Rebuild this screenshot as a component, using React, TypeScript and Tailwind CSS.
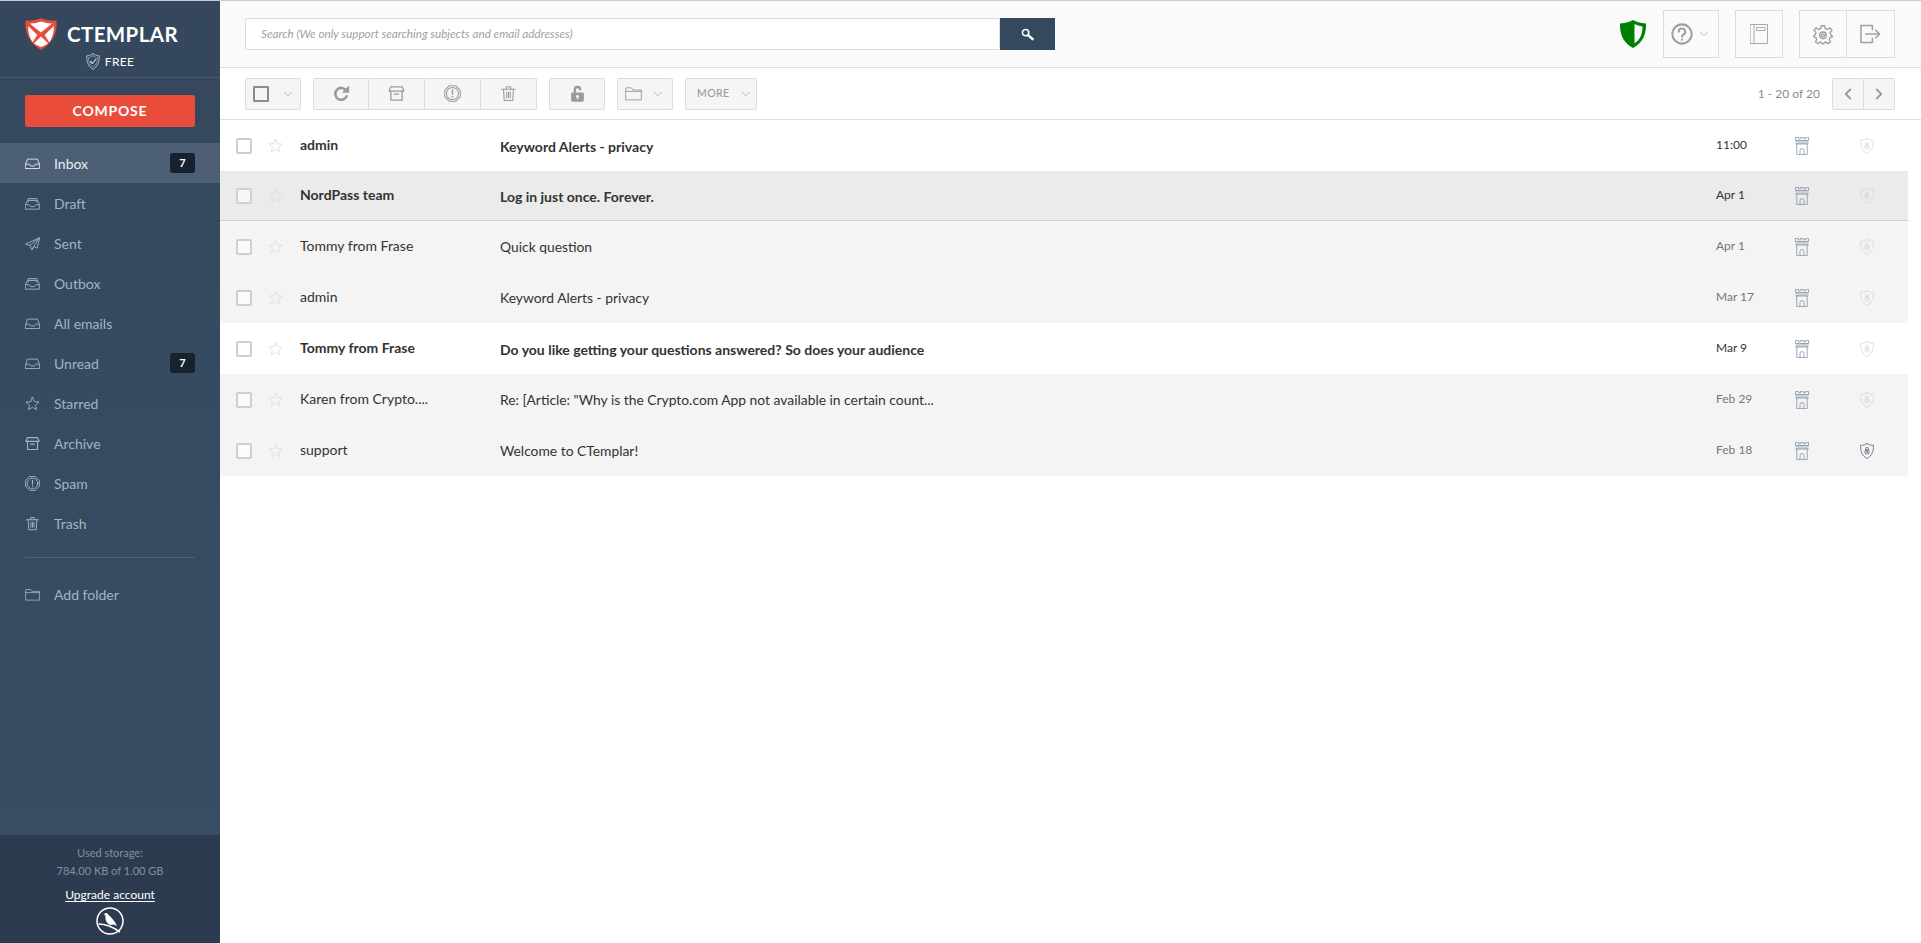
import React from "react";
import { ChevronDown, ChevronLeft, ChevronRight } from "lucide-react";

type P = { className?: string };
const S = ({ className, children, vb = "0 0 24 24", sw = 1.4 }: P & { children: React.ReactNode; vb?: string; sw?: number }) => (
  <svg viewBox={vb} className={className} fill="none" stroke="currentColor" strokeWidth={sw} strokeLinejoin="round" strokeLinecap="round">{children}</svg>
);

const InboxIcon = ({ className }: P) => (
  <S className={className}><path d="M1 13 L4 5 H20 L23 13 V20 H1 Z" /><path d="M1 13 H7 L9 16 H15 L17 13 H23" /></S>
);
const DraftIcon = ({ className }: P) => (
  <S className={className}><path d="M1 13 L4 7 H20 L23 13 V21 H1 Z" /><path d="M1 14 H7 L9 17 H15 L17 14 H23" /><path d="M5 10 V4 H19 V10" /><path d="M8 7 H16" /></S>
);
const SentIcon = ({ className }: P) => (
  <S className={className}><path d="M23 3 L1 13 L8 15 L11 22 L14 17 L19 19 Z" /><path d="M23 3 L8 15" /><path d="M23 3 L11 22" /></S>
);
const StarIcon = ({ className }: P) => (
  <S className={className}><path d="M12 2 L15 9 L22.5 9.7 L16.8 14.6 L18.6 22 L12 18 L5.4 22 L7.2 14.6 L1.5 9.7 L9 9 Z" /></S>
);
const ArchiveIcon = ({ className }: P) => (
  <S className={className} sw={1.8}><path d="M4 2.5 H20 L22.5 8.5 H1.5 Z" /><path d="M4 8.5 V21.5 H20 V8.5" /><path d="M9 13 H15" /></S>
);
const SpamIcon = ({ className }: P) => (
  <S className={className} sw={1.5}><path d="M7.5 1 H16.5 L23 7.5 V16.5 L16.5 23 H7.5 L1 16.5 V7.5 Z" /><circle cx="12" cy="12" r="8.5" /><path d="M12 7 V13" strokeWidth="2" /><path d="M12 16 V17" strokeWidth="2" /></S>
);
const TrashIcon = ({ className }: P) => (
  <S className={className} sw={1.5}><path d="M2.5 6 H21.5" /><path d="M9 6 V2.5 H15 V6" /><path d="M5 6 L6 22 H18 L19 6" /><path d="M9.5 10 V18 M12 10 V18 M14.5 10 V18" /></S>
);
const FolderIcon = ({ className }: P) => (
  <S className={className} sw={1.3}><path d="M1 6 V21 H23 V7 H11 L9 4 H2 Z" /><path d="M1 9 H23" /></S>
);
const LockIcon = ({ className }: P) => (
  <svg viewBox="0 0 24 24" className={className} fill="currentColor"><path d="M5 10.5 H19 A2 2 0 0 1 21 12.5 V21.5 A2 2 0 0 1 19 23.5 H5 A2 2 0 0 1 3 21.5 V12.5 A2 2 0 0 1 5 10.5 Z" /><path d="M6.5 11 V6.5 A5.5 5.5 0 0 1 17.5 6.5 V7.5 H14 V6.5 A2 2 0 0 0 10 6.5 V11 Z" /><circle cx="12" cy="16" r="2" fill="#f5f5f5" /><rect x="11" y="16" width="2" height="4" fill="#f5f5f5" /></svg>
);
const TowerIcon = ({ className }: P) => (
  <svg viewBox="0 0 14 18" className={className} fill="none" stroke="#74859a" strokeWidth="0.7">
    <path d="M.5 3.5 V.4 H3.5 V1.8 H5.5 V.4 H8.5 V1.8 H10.5 V.4 H13.5 V3.5" />
    <rect x=".5" y="3.5" width="13" height="3.5" fill="#ccd1d8" stroke="none" />
    <path d="M.5 3.5 H13.5 M.5 7 H13.5" />
    <path d="M1.8 7 V17.6 H12.2 V7" />
    <path d="M5 17.6 V13.5 A2 2 0 0 1 9 13.5 V17.6" />
  </svg>
);
const ShieldLock = ({ className }: P) => (
  <S className={className} vb="0 0 26 30" sw={1.3}>
    <path d="M13 1 C16 3 20 4.5 25 4.5 C25.5 16 22 24 13 29 C4 24 .5 16 1 4.5 C6 4.5 10 3 13 1 Z" />
    <rect x="8.8" y="13" width="8.4" height="7.5" rx="3.6" />
    <path d="M10.3 13.5 V11 A2.7 2.7 0 0 1 15.7 11 V13.5" />
    <circle cx="13" cy="16.7" r="0.8" />
  </S>
);
const CheckShield = ({ className }: P) => (
  <S className={className} vb="0 0 24 30" sw={1.4}>
    <path d="M12 1 C15 3.5 18 4.5 23 5 C23.5 16 20 24 12 29 C4 24 .5 16 1 5 C6 4.5 9 3.5 12 1 Z" />
    <path d="M12 5 C14.5 7 17 8 20 8 C20 16 18 21 12 25 C6 21 4 16 4 8 C7 8 9.5 7 12 5 Z" opacity=".6" />
    <path d="M7.5 15 L11 18.5 L17 11" strokeWidth="2" />
  </S>
);
const Logo = ({ className }: P) => (
  <svg viewBox="0 0 32 32" className={className}>
    <path d="M16 0.3 C21 2.3 26 3 31.5 2.6 C32.5 14 28 25 16 32 C4 25 -.5 14 .5 2.6 C6 3 11 2.3 16 .3 Z" fill="#e74c3c" />
    <path d="M4.8 5.4 C8 5.6 12 5 16 3.6 C20 5 24 5.6 27.2 5.4 L15.9 14.6 Z" fill="#fff" />
    <path d="M3.2 8 L12.3 17 L7.7 24.2 C4.3 19.6 3 14 3.2 8 Z" fill="#fff" />
    <path d="M28.8 8 L19.7 17 L24.3 24.2 C27.7 19.6 29 14 28.8 8 Z" fill="#fff" />
    <path d="M16 18.6 L23 25.2 C21 26.8 18.5 28 16 29 C13.5 28 11 26.8 9 25.2 Z" fill="#fff" />
  </svg>
);
const Bird = ({ className }: P) => (
  <svg viewBox="0 0 28 28" className={className}>
    <circle cx="14" cy="14" r="13" fill="none" stroke="#fff" strokeWidth="1.5" />
    <path d="M8 7 C10 5 12 6 12.5 8 C15 10 19 14 21 19 L17.5 17.5 L14.5 18 C11 17 9 13 9.5 9 Z" fill="#fff" />
    <path d="M2.5 17 C9 17 17 20 24 25" fill="none" stroke="#fff" strokeWidth="1.6" />
  </svg>
);
const QuestionIcon = ({ className }: P) => (
  <S className={className} sw={2.2}><circle cx="12" cy="12" r="10.5" /><path d="M8.5 9.5 A3.5 3.5 0 1 1 13.5 12.6 C12.5 13.2 12 13.8 12 15" /><path d="M12 18 V18.2" /></S>
);
const BookIcon = ({ className }: P) => (
  <S className={className} vb="0 0 18 20" sw={0.9}><rect x="0.5" y="0.5" width="17" height="19" /><path d="M4 .5 V19.5" /><rect x="7" y="3.5" width="8" height="3" /></S>
);
const GearIcon = ({ className }: P) => (
  <S className={className} sw={1.7}>
    <path d="M10 1.5 H14 L14.7 5 L17 6 L20 4 L22.8 7 L20.5 9.8 L21.3 12 L23 13.7 V15 L20.5 15.5 L19.5 18 L21 21 L18 23 L15.5 21 L13.5 22 L13 23 H11 L10.5 22 L8.5 21 L6 23 L3 21 L4.5 18 L3.5 15.5 L1 15 V13.7 L2.7 12 L3.5 9.8 L1.2 7 L4 4 L7 6 L9.3 5 Z" />
    <circle cx="12" cy="13" r="4" /><circle cx="12" cy="13" r="1.8" />
  </S>
);
const LogoutIcon = ({ className }: P) => (
  <S className={className} vb="0 0 22 20" sw={1.6}><path d="M13 6 V1 H1 V19 H13 V14" strokeLinecap="butt" /><path d="M6 10 H20" /><path d="M16.5 6 L20.5 10 L16.5 14" /></S>
);
const SearchIcon = ({ className }: P) => (
  <svg viewBox="0 0 16 16" className={className} fill="none" stroke="currentColor"><circle cx="6" cy="6" r="3.4" strokeWidth="1.6" /><path d="M8.6 8.6 L13.5 13" strokeWidth="2.6" strokeLinecap="round" /></svg>
);
const GreenShield = ({ className }: P) => (
  <svg viewBox="0 0 26 28" className={className}>
    <path fillRule="evenodd" d="M13 0 C16 2 20 3 26 3.5 C26.5 15 22 23.5 13 28 C4 23.5 -.5 15 0 3.5 C6 3 10 2 13 0 Z M14.5 4 V23.5 C20 20 22.5 14 22.5 6.5 C19.5 6 17 5.2 14.5 4 Z" fill="#008000" />
  </svg>
);

const nav: [string, (p: P) => React.ReactElement, number?][] = [
  ["Inbox", InboxIcon, 7],
  ["Draft", DraftIcon],
  ["Sent", SentIcon],
  ["Outbox", DraftIcon],
  ["All emails", InboxIcon],
  ["Unread", InboxIcon, 7],
  ["Starred", StarIcon],
  ["Archive", ArchiveIcon],
  ["Spam", SpamIcon],
  ["Trash", TrashIcon],
];

const rows = [
  { from: "admin", subject: "Keyword Alerts - privacy", date: "11:00", unread: true, bg: "bg-white h-[51px]" },
  { from: "NordPass team", subject: "Log in just once. Forever.", date: "Apr 1", unread: true, bg: "bg-[#ebebeb] h-[50px] border-b border-[#cfcfcf]", hover: true },
  { from: "Tommy from Frase", subject: "Quick question", date: "Apr 1", bg: "bg-[#f4f4f4] h-[51px]" },
  { from: "admin", subject: "Keyword Alerts - privacy", date: "Mar 17", bg: "bg-[#f4f4f4] h-[51px]" },
  { from: "Tommy from Frase", subject: "Do you like getting your questions answered? So does your audience", date: "Mar 9", unread: true, bg: "bg-white h-[51px]" },
  { from: "Karen from Crypto....", subject: 'Re: [Article: "Why is the Crypto.com App not available in certain count...', date: "Feb 29", bg: "bg-[#f4f4f4] h-[51px]" },
  { from: "support", subject: "Welcome to CTemplar!", date: "Feb 18", bg: "bg-[#f4f4f4] h-[51px]", secure: true },
];

const tbtn = "h-[32px] flex items-center justify-center bg-[#f5f5f5] border border-[#dcdcdc] text-[#9a9a9a]";

export default function App() {
  return (
    <div className="w-[1921px] h-[943px] overflow-hidden flex flex-col bg-white [font-family:Lato,sans-serif] text-[#333]">
      <div className="h-px bg-[#c5ccd4] shrink-0" />
      <div className="flex flex-1 min-h-0">
        <aside className="w-[220px] shrink-0 flex flex-col bg-gradient-to-b from-[#34475d] to-[#384e65]">
          <div className="h-[77px] shrink-0 border-b border-[#46596e] flex flex-col pt-[17px]">
            <div className="flex items-center gap-[10px] h-[32px] pl-[25px]">
              <Logo className="w-[32px] h-[32px]" />
              <span className="text-[20.5px] font-bold tracking-[0.4px] text-white leading-none">CTEMPLAR</span>
            </div>
            <div className="flex items-center justify-center gap-[5px] mt-[3px] h-[17px]">
              <CheckShield className="w-[14px] h-[17px] text-[#c8d6e5]" />
              <span className="text-[12px] text-white tracking-[0.3px]">FREE</span>
            </div>
          </div>
          <div className="px-[25px] pt-[17px] pb-[16px]">
            <button className="w-[170px] h-[32px] pb-[2px] bg-[#ea4c3c] rounded-[2px] text-white text-[14px] font-bold tracking-[0.8px]">COMPOSE</button>
          </div>
          <nav className="flex flex-col">
            {nav.map(([label, Icon, badge], i) => (
              <div key={label} className={`h-[40px] flex items-center pl-[25px] pr-[25px] ${i === 0 ? "bg-[#4d5f74] text-[#e8edf2]" : "text-[#a4b3c3]"}`}>
                <Icon className="w-[15px] h-[15px] shrink-0" />
                <span className="ml-[14px] text-[14px]">{label}</span>
                {badge ? (
                  <span className="ml-auto w-[25px] h-[20px] rounded-[3px] bg-[#18222f] text-white text-[11px] font-bold flex items-center justify-center">{badge}</span>
                ) : null}
              </div>
            ))}
          </nav>
          <div className="mx-[25px] mt-[14px] border-t border-[#4f6176]" />
          <div className="h-[40px] mt-[16px] flex items-center pl-[25px] text-[#a4b3c3]">
            <FolderIcon className="w-[15px] h-[15px]" />
            <span className="ml-[14px] text-[14px]">Add folder</span>
          </div>
          <div className="mt-auto h-[108px] bg-[#2c3b50] flex flex-col items-center pt-[9px] text-[12px]">
            <span className="leading-[18px] text-[11px] text-[#84909f]">Used storage:</span>
            <span className="leading-[18px] text-[11px] text-[#84909f]">784.00 KB of 1.00 GB</span>
            <span className="mt-[6px] leading-[17px] text-white underline underline-offset-2">Upgrade account</span>
            <Bird className="w-[28px] h-[28px] mt-[4px]" />
          </div>
        </aside>
        <main className="flex-1 min-w-0 flex flex-col">
          <header className="h-[67px] shrink-0 bg-[#fafafa] border-b border-[#dedede] flex items-center pl-[25px] pr-[26px]">
            <div className="flex w-[810px] h-[32px]">
              <div className="flex-1 bg-white border border-[#dcdcdc] rounded-l-[2px] flex items-center pl-[15px] text-[11.7px] italic text-[#a0a0a0]">
                Search (We only support searching subjects and email addresses)
              </div>
              <button className="w-[55px] bg-[#34495e] flex items-center justify-center text-white">
                <SearchIcon className="w-[15px] h-[15px]" />
              </button>
            </div>
            <GreenShield className="ml-auto w-[26px] h-[28px]" />
            <button className="ml-[17px] w-[56px] h-[48px] border border-[#dcdcdc] flex items-center justify-center gap-[4px] text-[#a0a0a0]">
              <QuestionIcon className="w-[22px] h-[22px]" />
              <ChevronDown className="w-[14px] h-[14px]" strokeWidth={1.2} />
            </button>
            <button className="ml-[16px] w-[48px] h-[48px] border border-[#dcdcdc] flex items-center justify-center text-[#a0a0a0]">
              <BookIcon className="w-[18px] h-[20px]" />
            </button>
            <button className="ml-[16px] w-[48px] h-[48px] border border-[#dcdcdc] flex items-center justify-center text-[#a0a0a0]">
              <GearIcon className="w-[20px] h-[21px]" />
            </button>
            <button className="w-[48px] h-[48px] border border-[#dcdcdc] border-l-0 flex items-center justify-center text-[#a0a0a0]">
              <LogoutIcon className="w-[21px] h-[20px]" />
            </button>
          </header>
          <div className="h-[52px] shrink-0 border-b border-[#dedede] flex items-center pl-[25px] pr-[26px]">
            <div className={`${tbtn} w-[56px] rounded-[2px] justify-start pl-[7px] gap-[12px]`}>
              <span className="w-[16px] h-[16px] border-2 border-[#8c8c8c] rounded-[1px]" />
              <ChevronDown className="w-[14px] h-[14px]" strokeWidth={1.2} />
            </div>
            <div className="flex ml-[12px]">
              <div className={`${tbtn} w-[56px] rounded-l-[2px]`}>
                <svg viewBox="0 0 20 20" className="w-[17px] h-[17px]" fill="none" stroke="currentColor" strokeWidth="3"><path d="M15.8 7 A7 7 0 1 0 16.5 12" /><path d="M19 0.5 V9 H10.5 Z" fill="currentColor" stroke="none" /></svg>
              </div>
              <div className={`${tbtn} w-[56px] border-l-0`}><ArchiveIcon className="w-[17px] h-[17px]" /></div>
              <div className={`${tbtn} w-[56px] border-l-0`}><SpamIcon className="w-[17px] h-[17px]" /></div>
              <div className={`${tbtn} w-[56px] border-l-0 rounded-r-[2px]`}><TrashIcon className="w-[17px] h-[17px]" /></div>
            </div>
            <div className={`${tbtn} w-[56px] ml-[12px] rounded-[2px]`}><LockIcon className="w-[17px] h-[17px]" /></div>
            <div className={`${tbtn} w-[56px] ml-[12px] rounded-[2px] gap-[9px]`}>
              <FolderIcon className="w-[17px] h-[17px]" />
              <ChevronDown className="w-[14px] h-[14px]" strokeWidth={1.2} />
            </div>
            <div className={`${tbtn} w-[72px] ml-[12px] rounded-[2px] justify-start pl-[11px] gap-[9px]`}>
              <span className="text-[10.5px] font-medium tracking-[0.4px]">MORE</span>
              <ChevronDown className="w-[14px] h-[14px]" strokeWidth={1.2} />
            </div>
            <span className="ml-auto text-[12px] text-[#8a8a8a]">1 - 20 of 20</span>
            <div className="flex ml-[12px] rounded-[2px]">
              <div className={`${tbtn} w-[32px] rounded-l-[2px] text-[#8a8a8a]`}><ChevronLeft className="w-[18px] h-[18px]" strokeWidth={2.4} /></div>
              <div className={`${tbtn} w-[32px] -ml-px rounded-r-[2px] text-[#8a8a8a]`}><ChevronRight className="w-[18px] h-[18px]" strokeWidth={2.4} /></div>
            </div>
          </div>
          <div className="w-[1688px]">
            {rows.map((r, i) => (
              <div key={i} className={`${r.bg} flex items-center`}>
                <span className={`ml-[16px] w-[16px] h-[16px] border-2 rounded-[2px] shrink-0 bg-white/60 ${r.hover ? "border-[#d0d0d0] bg-transparent" : "border-[#cfcfcf]"}`} />
                <StarIcon className="ml-[16px] w-[15px] h-[15px] shrink-0 text-[#dedede]" />
                <span className={`ml-[17px] w-[200px] shrink-0 pb-[2px] text-[14px] text-[#333] ${r.unread ? "font-bold" : ""}`}>{r.from}</span>
                <span className={`w-[1216px] shrink-0 pt-[1px] text-[#333] ${r.unread ? "font-bold text-[14px]" : "text-[13.85px]"}`}>{r.subject}</span>
                <span className={`w-[79px] shrink-0 pb-[1px] text-[12px] ${r.unread ? "text-[#333]" : "text-[#777]"}`}>{r.date}</span>
                <TowerIcon className="w-[14px] h-[18px] shrink-0" />
                <ShieldLock className={`ml-[51px] w-[14px] h-[16px] shrink-0 ${r.secure ? "text-[#3c5068]" : "text-[#d2d2d2]"}`} />
              </div>
            ))}
          </div>
        </main>
      </div>
    </div>
  );
}
